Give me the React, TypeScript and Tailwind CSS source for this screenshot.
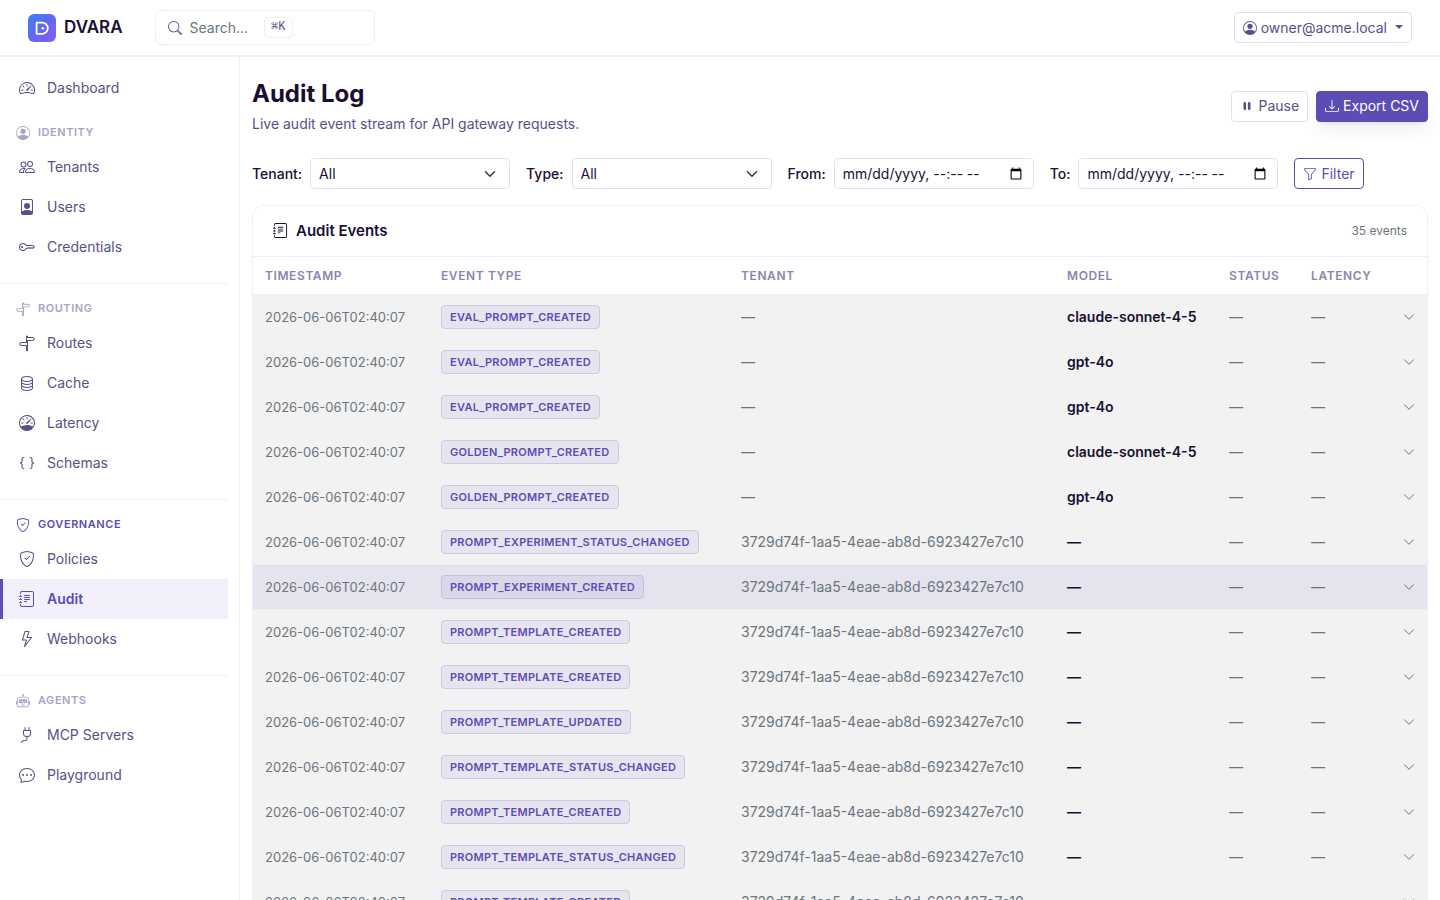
import {
  BsBraces,
  BsChatDots,
  BsChevronDown,
  BsDatabase,
  BsDownload,
  BsFilePerson,
  BsFunnel,
  BsJournalText,
  BsKey,
  BsLightning,
  BsPauseFill,
  BsPeople,
  BsPersonCircle,
  BsPlug,
  BsRobot,
  BsSearch,
  BsShieldCheck,
  BsSignpostSplit,
  BsSpeedometer,
  BsSpeedometer2,
} from 'react-icons/bs';
import type { IconType } from 'react-icons';

type NavItem = { label: string; icon: IconType; active?: boolean };
type NavGroup = { title: string; icon: IconType; active?: boolean; items: NavItem[] };

const groups: NavGroup[] = [
  {
    title: 'Identity',
    icon: BsPersonCircle,
    items: [
      { label: 'Tenants', icon: BsPeople },
      { label: 'Users', icon: BsFilePerson },
      { label: 'Credentials', icon: BsKey },
    ],
  },
  {
    title: 'Routing',
    icon: BsSignpostSplit,
    items: [
      { label: 'Routes', icon: BsSignpostSplit },
      { label: 'Cache', icon: BsDatabase },
      { label: 'Latency', icon: BsSpeedometer },
      { label: 'Schemas', icon: BsBraces },
    ],
  },
  {
    title: 'Governance',
    icon: BsShieldCheck,
    active: true,
    items: [
      { label: 'Policies', icon: BsShieldCheck },
      { label: 'Audit', icon: BsJournalText, active: true },
      { label: 'Webhooks', icon: BsLightning },
    ],
  },
  {
    title: 'Agents',
    icon: BsRobot,
    items: [
      { label: 'MCP Servers', icon: BsPlug },
      { label: 'Playground', icon: BsChatDots },
    ],
  },
];

const TENANT_ID = '3729d74f-1aa5-4eae-ab8d-6923427e7c10';

type AuditEvent = { type: string; tenant?: string; model?: string; hovered?: boolean };

const events: AuditEvent[] = [
  { type: 'EVAL_PROMPT_CREATED', model: 'claude-sonnet-4-5' },
  { type: 'EVAL_PROMPT_CREATED', model: 'gpt-4o' },
  { type: 'EVAL_PROMPT_CREATED', model: 'gpt-4o' },
  { type: 'GOLDEN_PROMPT_CREATED', model: 'claude-sonnet-4-5' },
  { type: 'GOLDEN_PROMPT_CREATED', model: 'gpt-4o' },
  { type: 'PROMPT_EXPERIMENT_STATUS_CHANGED', tenant: TENANT_ID },
  { type: 'PROMPT_EXPERIMENT_CREATED', tenant: TENANT_ID, hovered: true },
  { type: 'PROMPT_TEMPLATE_CREATED', tenant: TENANT_ID },
  { type: 'PROMPT_TEMPLATE_CREATED', tenant: TENANT_ID },
  { type: 'PROMPT_TEMPLATE_UPDATED', tenant: TENANT_ID },
  { type: 'PROMPT_TEMPLATE_STATUS_CHANGED', tenant: TENANT_ID },
  { type: 'PROMPT_TEMPLATE_CREATED', tenant: TENANT_ID },
  { type: 'PROMPT_TEMPLATE_STATUS_CHANGED', tenant: TENANT_ID },
  { type: 'PROMPT_TEMPLATE_CREATED', tenant: TENANT_ID },
];

function Logo() {
  return (
    <svg viewBox="0 0 28 28" className="h-7 w-7" aria-hidden="true">
      <defs>
        <linearGradient id="logo-bg" x1="0" y1="0" x2="1" y2="1">
          <stop offset="0" stopColor="#3b82f6" />
          <stop offset="0.5" stopColor="#6366f1" />
          <stop offset="1" stopColor="#8b5cf6" />
        </linearGradient>
      </defs>
      <rect width="28" height="28" rx="6" fill="url(#logo-bg)" />
      <path d="M8.6 8.6h5.6a5.6 5.6 0 0 1 0 11.2H8.6z" fill="none" stroke="#fff" strokeWidth="1.8" strokeLinejoin="round" />
      <circle cx="14.8" cy="14.2" r="1.3" fill="#fff" />
    </svg>
  );
}

function TopBar() {
  return (
    <header className="flex h-[57px] shrink-0 items-center border-b-2 border-[#efedf9] px-7">
      <a href="#" className="flex items-center gap-2 text-[17px] font-semibold text-[#1a0f33]">
        <Logo />
        DVARA
      </a>
      <button
        type="button"
        className="ml-8 flex h-[35px] w-[220px] items-center rounded-md border border-[#efedf9] px-3 text-[#6c757d]"
      >
        <BsSearch className="h-3.5 w-3.5 text-[#6b6296]" />
        <span className="ml-2">Search...</span>
        <kbd className="ml-4 rounded border border-[#efedf9] px-1.5 font-mono text-xs leading-[19px] text-[#5a4f87]">
          ⌘K
        </kbd>
      </button>
      <button
        type="button"
        className="ml-auto flex h-[31px] items-center gap-1 rounded border border-[#e2def5] px-2 text-[#5a4f87]"
      >
        <BsPersonCircle className="h-3.5 w-3.5" />
        owner@acme.local
        <span className="mb-0.5 ml-1 border-x-4 border-t-4 border-x-transparent border-t-[#5a4f87]" />
      </button>
    </header>
  );
}

function NavLink({ label, icon: Icon, active }: NavItem) {
  return (
    <a
      href="#"
      aria-current={active ? 'page' : undefined}
      className={`flex h-10 items-center gap-3 border-l-[3px] pl-4 ${
        active
          ? 'border-[#5b4db5] bg-[#f2f0fa] font-semibold text-[#5b4db5]'
          : 'border-transparent text-[#5a4f87]'
      }`}
    >
      <Icon className="h-4 w-4" />
      {label}
    </a>
  );
}

function Sidebar() {
  return (
    <nav className="w-60 shrink-0 border-r border-[#efedf9] pt-[11px] pr-[11px]">
      <NavLink label="Dashboard" icon={BsSpeedometer2} />
      {groups.map(({ title, icon: Icon, active, items }, i) => (
        <section key={title} className={i > 0 ? 'mt-4 border-t border-[#efedf9]' : ''}>
          <h2
            className={`flex h-[39px] items-center gap-2 pt-2.5 pl-4 text-[11px] font-semibold tracking-wider uppercase ${
              active ? 'text-[#5b4db5]' : 'text-[#aaa3c6]'
            }`}
          >
            <Icon className="h-3.5 w-3.5" />
            {title}
          </h2>
          {items.map((item) => (
            <NavLink key={item.label} {...item} />
          ))}
        </section>
      ))}
    </nav>
  );
}

function SelectField({ id, label }: { id: string; label: string }) {
  return (
    <div className="flex items-center gap-2">
      <label htmlFor={id} className="font-medium">
        {label}
      </label>
      <div className="relative">
        <select id={id} className="h-[31px] w-[200px] appearance-none rounded border border-[#e2def5] bg-white px-2">
          <option>All</option>
        </select>
        <svg
          viewBox="0 0 16 16"
          className="pointer-events-none absolute inset-y-0 right-3.5 my-auto h-3 w-3"
          fill="none"
          stroke="#343a40"
          strokeWidth="2"
          strokeLinecap="round"
          strokeLinejoin="round"
        >
          <path d="m2 5 6 6 6-6" />
        </svg>
      </div>
    </div>
  );
}

function DateField({ id, label }: { id: string; label: string }) {
  return (
    <div className="flex items-center gap-2">
      <label htmlFor={id} className="font-medium">
        {label}
      </label>
      <input
        id={id}
        type="datetime-local"
        className="h-[31px] w-[200px] rounded border border-[#e2def5] bg-white px-2 [&::-webkit-datetime-edit-day-field]:p-0 [&::-webkit-datetime-edit-hour-field]:p-0 [&::-webkit-datetime-edit-minute-field]:p-0 [&::-webkit-datetime-edit-month-field]:p-0 [&::-webkit-datetime-edit-text]:p-0 [&::-webkit-datetime-edit-year-field]:p-0"
      />
    </div>
  );
}

function EventsTable() {
  return (
    <section className="mt-4 overflow-hidden rounded-xl border border-[#efedf9]">
      <div className="flex h-[50px] items-center justify-between px-5">
        <h2 className="flex items-center gap-2 text-[15px] font-semibold">
          <BsJournalText className="h-[15px] w-[15px]" />
          Audit Events
        </h2>
        <span className="text-xs text-[#6c757d]">35 events</span>
      </div>
      <table className="w-full table-fixed border-t border-[#efedf9] text-left">
        <colgroup>
          <col className="w-[176px]" />
          <col className="w-[300px]" />
          <col />
          <col className="w-[162px]" />
          <col className="w-[82px]" />
          <col className="w-[92px]" />
          <col className="w-9" />
        </colgroup>
        <thead>
          <tr className="h-[38px] text-xs tracking-wider text-[#8c84b0] uppercase">
            {['Timestamp', 'Event Type', 'Tenant', 'Model', 'Status', 'Latency'].map((heading) => (
              <th key={heading} scope="col" className="px-3 font-semibold">
                {heading}
              </th>
            ))}
            <td />
          </tr>
        </thead>
        <tbody>
          {events.map((event, i) => (
            <tr
              key={i}
              className={`h-[45px] border-t border-[#efedf5] text-[#6c757d] ${
                event.hovered ? 'bg-[#e5e3ee]' : 'bg-[#f2f2f2]'
              }`}
            >
              <td className="px-3 text-[13px]">2026-06-06T02:40:07</td>
              <td className="px-3">
                <span
                  className={`inline-block rounded border px-2 text-[11px] leading-[22px] font-semibold tracking-wide text-[#5b4db5] ${
                    event.hovered ? 'border-[#c5bfe3] bg-[#dad7e8]' : 'border-[#cdc8e6] bg-[#e6e4ee]'
                  }`}
                >
                  {event.type}
                </span>
              </td>
              <td className="px-3">{event.tenant ?? '—'}</td>
              <td className="px-3 font-semibold text-[#1a0f33]">{event.model ?? '—'}</td>
              <td className="px-3">—</td>
              <td className="px-3">—</td>
              <td className="px-3">
                <BsChevronDown className="h-3 w-3" />
              </td>
            </tr>
          ))}
        </tbody>
      </table>
    </section>
  );
}

export default function App() {
  return (
    <div className="flex h-screen flex-col overflow-hidden bg-white font-['Inter',sans-serif] text-sm text-[#1a0f33]">
      <TopBar />
      <div className="flex min-h-0 flex-1">
        <Sidebar />
        <main className="min-w-0 flex-1 overflow-y-auto px-3 pt-[21px] [scrollbar-width:none]">
          <div className="flex items-center justify-between">
            <div>
              <h1 className="text-2xl font-bold">Audit Log</h1>
              <p className="mt-1 text-[#5a4f87]">Live audit event stream for API gateway requests.</p>
            </div>
            <div className="flex gap-2">
              <button
                type="button"
                className="flex h-[31px] items-center gap-1 rounded border border-[#e2def5] px-2 text-[#5a4f87]"
              >
                <BsPauseFill className="h-3.5 w-3.5" />
                Pause
              </button>
              <button
                type="button"
                className="flex h-[31px] items-center gap-1 rounded border border-[#5b4db5] bg-[#5b4db5] px-2 text-white shadow-lg shadow-[#5b4db5]/10"
              >
                <BsDownload className="h-3.5 w-3.5" />
                Export CSV
              </button>
            </div>
          </div>

          <form className="mt-6 flex flex-wrap items-center gap-4">
            <SelectField id="tenant" label="Tenant:" />
            <SelectField id="type" label="Type:" />
            <DateField id="from" label="From:" />
            <DateField id="to" label="To:" />
            <button
              type="button"
              className="flex h-[31px] items-center gap-1 rounded border border-[#5b4db5] px-2 text-[#5b4db5]"
            >
              <BsFunnel className="h-3.5 w-3.5" />
              Filter
            </button>
          </form>

          <EventsTable />
        </main>
      </div>
    </div>
  );
}
